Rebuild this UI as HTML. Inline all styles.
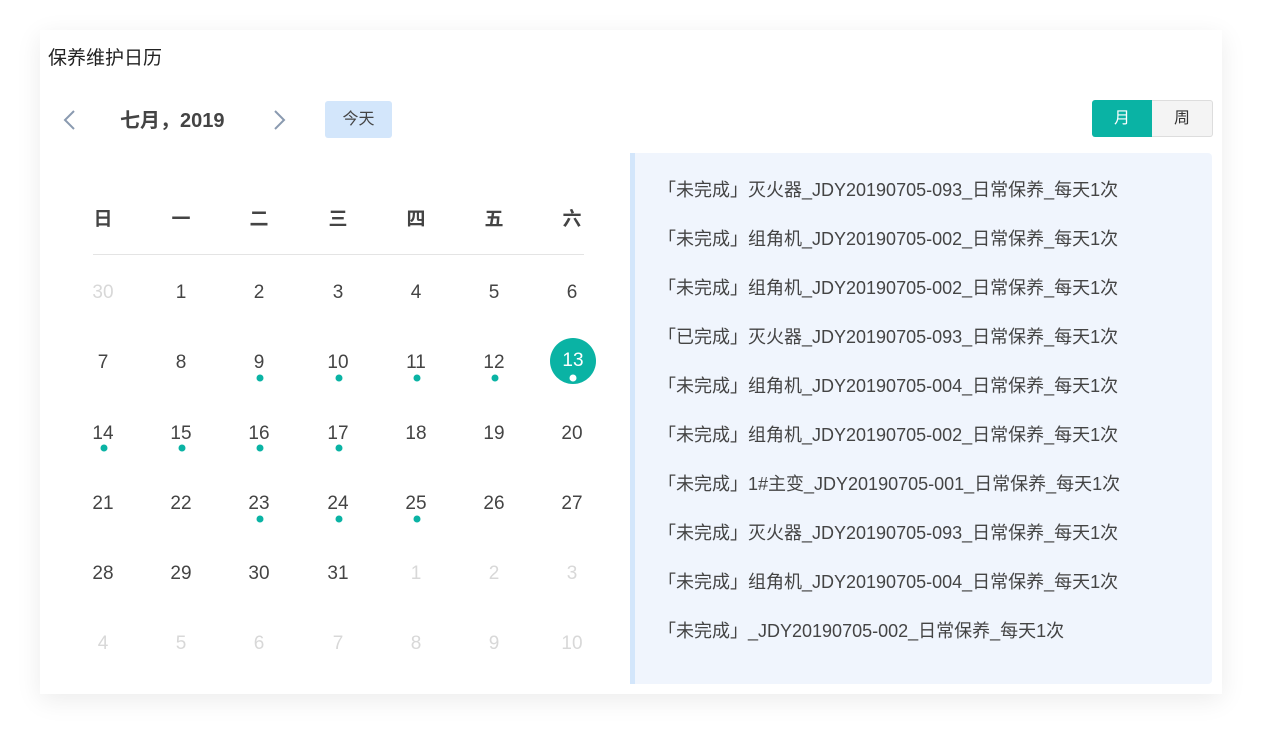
<!DOCTYPE html>
<html><head><meta charset="utf-8"><style>
*{margin:0;padding:0;box-sizing:border-box}
body{width:1262px;height:744px;background:#fff;position:relative;overflow:hidden;font-family:"Liberation Sans","Noto Sans CJK SC",sans-serif;color:#333}
.card{position:absolute;left:40px;top:30px;width:1182px;height:664px;background:#fff;box-shadow:0 6px 24px rgba(0,0,0,0.08)}
.a{position:absolute}
.t{position:absolute;font-size:19px;line-height:20px;transform:translate(-50%,-50%);white-space:nowrap;color:#444;margin-top:2px}
.g{color:#d8d8d8}
.dot{position:absolute;width:7px;height:7px;border-radius:50%;background:#0ab3a4;transform:translate(-50%,-50%)}
.item{position:absolute;left:658px;font-size:18px;color:#444;transform:translateY(-50%);white-space:nowrap}
</style></head><body>
<div class="card"></div>
<div class="a" style="left:48px;top:43px;font-size:19px;color:#222">保养维护日历</div>
<svg class="a" style="left:62px;top:109px" width="14" height="22"><path d="M12 2 L3 11 L12 20" fill="none" stroke="#8a9ab0" stroke-width="2"/></svg>
<div class="a" style="left:120px;top:104px;font-size:20px;font-weight:bold;color:#444">七月，2019</div>
<svg class="a" style="left:273px;top:109px" width="14" height="22"><path d="M2 2 L11 11 L2 20" fill="none" stroke="#8a9ab0" stroke-width="2"/></svg>
<div class="a" style="left:325px;top:101px;width:67px;height:37px;background:#d3e6fb;border-radius:3px;font-size:16px;line-height:37px;text-align:center;color:#444">今天</div>
<div class="a" style="left:1092px;top:100px;width:60px;height:37px;background:#0ab3a4;border-radius:3px 0 0 3px;color:#fff;font-size:16px;line-height:37px;text-align:center">月</div>
<div class="a" style="left:1152px;top:100px;width:61px;height:37px;background:#f4f4f4;border:1px solid #ddd;border-left:none;border-radius:0 3px 3px 0;color:#333;font-size:16px;line-height:35px;text-align:center">周</div>
<div class="a" style="left:93px;top:254px;width:491px;height:1px;background:#e4e4e4"></div>
<div class="a" style="left:573px;top:361px;width:46px;height:46px;margin:-23px 0 0 -23px;border-radius:50%;background:#0ab3a4"></div>
<div class="a" style="left:630px;top:153px;width:582px;height:531px;background:#f0f5fd;border-left:5px solid #d3e6fb;border-radius:0 4px 4px 0"></div>
<div class="item" style="top:189px">「未完成」灭火器_JDY20190705-093_日常保养_每天1次</div>
<div class="item" style="top:238px">「未完成」组角机_JDY20190705-002_日常保养_每天1次</div>
<div class="item" style="top:287px">「未完成」组角机_JDY20190705-002_日常保养_每天1次</div>
<div class="item" style="top:336px">「已完成」灭火器_JDY20190705-093_日常保养_每天1次</div>
<div class="item" style="top:385px">「未完成」组角机_JDY20190705-004_日常保养_每天1次</div>
<div class="item" style="top:434px">「未完成」组角机_JDY20190705-002_日常保养_每天1次</div>
<div class="item" style="top:483px">「未完成」1#主变_JDY20190705-001_日常保养_每天1次</div>
<div class="item" style="top:532px">「未完成」灭火器_JDY20190705-093_日常保养_每天1次</div>
<div class="item" style="top:581px">「未完成」组角机_JDY20190705-004_日常保养_每天1次</div>
<div class="item" style="top:630px">「未完成」_JDY20190705-002_日常保养_每天1次</div>
<div style="position:absolute;left:0;top:0">
<div class="t" style="left:103px;top:218px;font-weight:bold">日</div>
<div class="t" style="left:181px;top:218px;font-weight:bold">一</div>
<div class="t" style="left:259px;top:218px;font-weight:bold">二</div>
<div class="t" style="left:338px;top:218px;font-weight:bold">三</div>
<div class="t" style="left:416px;top:218px;font-weight:bold">四</div>
<div class="t" style="left:494px;top:218px;font-weight:bold">五</div>
<div class="t" style="left:572px;top:218px;font-weight:bold">六</div>
<div class="t g" style="left:103px;top:291px">30</div><div class="t" style="left:181px;top:291px">1</div><div class="t" style="left:259px;top:291px">2</div><div class="t" style="left:338px;top:291px">3</div><div class="t" style="left:416px;top:291px">4</div><div class="t" style="left:494px;top:291px">5</div><div class="t" style="left:572px;top:291px">6</div>
<div class="t" style="left:103px;top:361px">7</div><div class="t" style="left:181px;top:361px">8</div><div class="t" style="left:259px;top:361px">9</div><div class="t" style="left:338px;top:361px">10</div><div class="t" style="left:416px;top:361px">11</div><div class="t" style="left:494px;top:361px">12</div><div class="t" style="left:573px;top:359px;color:#fff">13</div>
<div class="dot" style="left:260px;top:378px"></div><div class="dot" style="left:339px;top:378px"></div><div class="dot" style="left:417px;top:378px"></div><div class="dot" style="left:495px;top:378px"></div><div class="dot" style="left:573px;top:378px;background:#fff"></div>
<div class="t" style="left:103px;top:432px">14</div><div class="t" style="left:181px;top:432px">15</div><div class="t" style="left:259px;top:432px">16</div><div class="t" style="left:338px;top:432px">17</div><div class="t" style="left:416px;top:432px">18</div><div class="t" style="left:494px;top:432px">19</div><div class="t" style="left:572px;top:432px">20</div>
<div class="dot" style="left:104px;top:448px"></div><div class="dot" style="left:182px;top:448px"></div><div class="dot" style="left:260px;top:448px"></div><div class="dot" style="left:339px;top:448px"></div>
<div class="t" style="left:103px;top:502px">21</div><div class="t" style="left:181px;top:502px">22</div><div class="t" style="left:259px;top:502px">23</div><div class="t" style="left:338px;top:502px">24</div><div class="t" style="left:416px;top:502px">25</div><div class="t" style="left:494px;top:502px">26</div><div class="t" style="left:572px;top:502px">27</div>
<div class="dot" style="left:260px;top:519px"></div><div class="dot" style="left:339px;top:519px"></div><div class="dot" style="left:417px;top:519px"></div>
<div class="t" style="left:103px;top:572px">28</div><div class="t" style="left:181px;top:572px">29</div><div class="t" style="left:259px;top:572px">30</div><div class="t" style="left:338px;top:572px">31</div><div class="t g" style="left:416px;top:572px">1</div><div class="t g" style="left:494px;top:572px">2</div><div class="t g" style="left:572px;top:572px">3</div>
<div class="t g" style="left:103px;top:642px">4</div><div class="t g" style="left:181px;top:642px">5</div><div class="t g" style="left:259px;top:642px">6</div><div class="t g" style="left:338px;top:642px">7</div><div class="t g" style="left:416px;top:642px">8</div><div class="t g" style="left:494px;top:642px">9</div><div class="t g" style="left:572px;top:642px">10</div>
</div>
</body></html>
